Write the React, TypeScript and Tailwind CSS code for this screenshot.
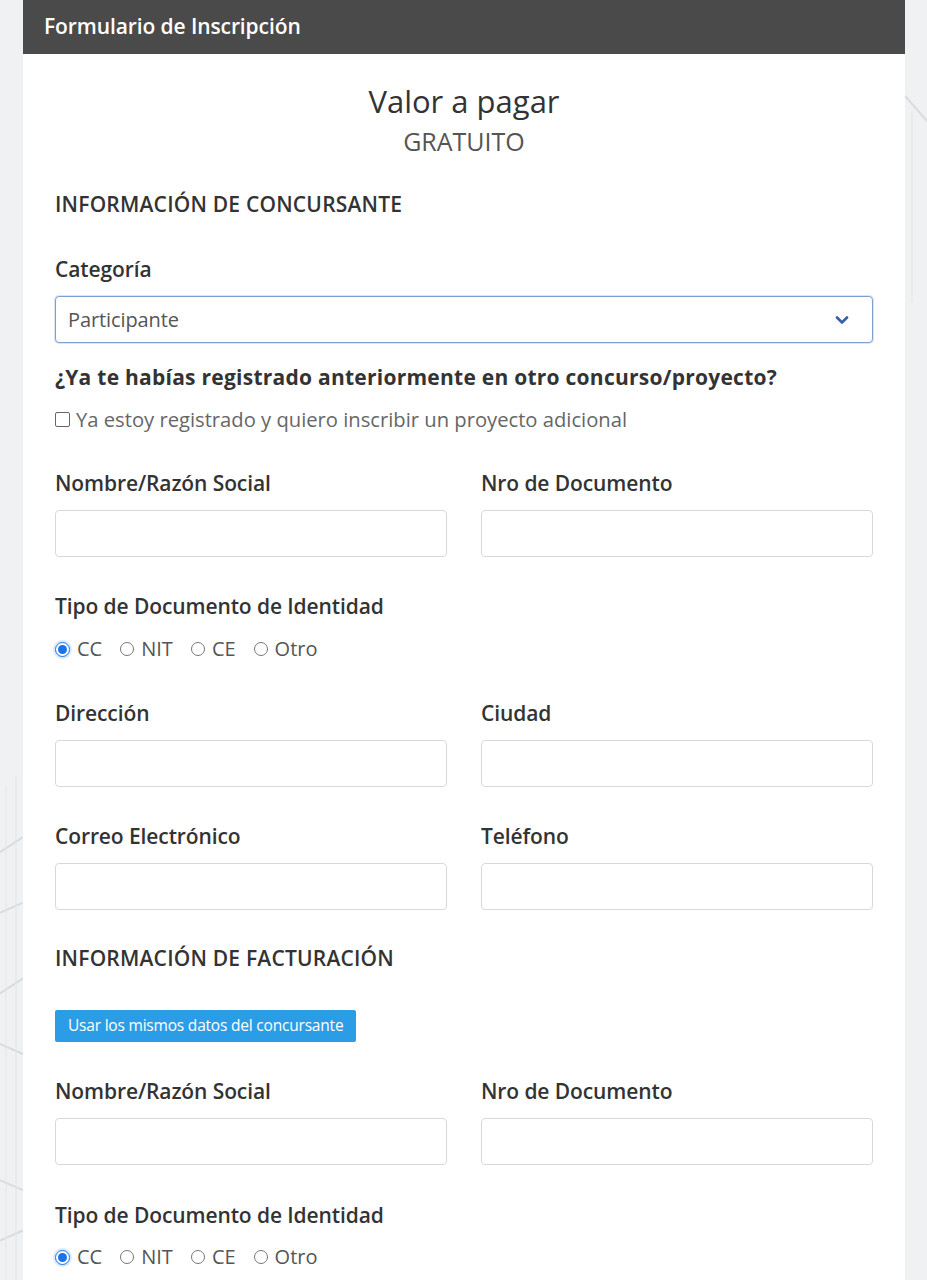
import { ChevronDown } from "lucide-react";

const font = { fontFamily: '"Open Sans", "Noto Sans", "Liberation Sans", sans-serif' };

function Label({ children }: { children: React.ReactNode }) {
  return <p className="text-[21px] font-semibold leading-[28px] tracking-[-0.1px] text-[#333333]">{children}</p>;
}

function TextInput() {
  return <div className="mt-[13px] h-[47px] rounded-[4px] border border-[#d6d9dc] bg-white" />;
}

function Field({ label }: { label: string }) {
  return (
    <div>
      <Label>{label}</Label>
      <TextInput />
    </div>
  );
}

function Radio({ checked, label }: { checked?: boolean; label: string }) {
  return (
    <span className="flex items-center gap-[7px]">
      {checked ? (
        <span className="flex h-[15px] w-[15px] items-center justify-center rounded-full border-[1.5px] border-[#1a73e8] bg-white shadow-[0_0_0_2px_rgba(26,115,232,0.15)]">
          <span className="h-[9px] w-[9px] rounded-full bg-[#1a73e8]" />
        </span>
      ) : (
        <span className="h-[14px] w-[14px] rounded-full border border-[#777777] bg-white" />
      )}
      <span className="text-[20px] leading-[28px] text-[#555555]">{label}</span>
    </span>
  );
}

function DocTypes({ className }: { className: string }) {
  return (
    <div className={`${className} flex items-center gap-[18px]`}>
      <Radio checked label="CC" />
      <Radio label="NIT" />
      <Radio label="CE" />
      <Radio label="Otro" />
    </div>
  );
}

export default function App() {
  return (
    <div className="relative min-h-[1280px] overflow-hidden bg-[#eff1f2]" style={font}>
      <svg className="absolute inset-0 h-full w-full" viewBox="0 0 927 1280" preserveAspectRatio="none">
        <g stroke="#d9dcdf" strokeWidth="2" fill="none">
          <path d="M0 845 L23 830" />
          <path d="M0 905 L23 895" />
          <path d="M0 985 L23 970" />
          <path d="M0 1035 L23 1045" />
          <path d="M0 1170 L23 1180" />
          <path d="M0 1230 L23 1220" />
          <path d="M905 95 L927 120" />
        </g>
        <g stroke="#e4e6e8" strokeWidth="1" fill="none">
          <path d="M6 780 L6 1280" />
          <path d="M16 770 L16 1280" />
          <path d="M912 110 L912 300" />
        </g>
      </svg>
      <div className="relative mx-[23px] min-h-[1280px] w-[882px] bg-white">
        <div className="flex h-[54px] items-center bg-[#4a4a4a] px-[21px]">
          <h1 className="text-[21px] font-semibold tracking-[-0.1px] text-white">Formulario de Inscripción</h1>
        </div>

        <div className="px-[32px] pb-[20px]">
          <div className="pt-[28px] text-center">
            <p className="text-[31px] leading-[38px] text-[#333333]">Valor a pagar</p>
            <p className="mt-[6px] text-[25px] leading-[30px] text-[#555555]">GRATUITO</p>
          </div>

          <h2 className="mt-[34px] text-[21px] font-semibold leading-[28px] tracking-[0.2px] text-[#333333]">
            INFORMACIÓN DE CONCURSANTE
          </h2>

          <div className="mt-[37px]">
            <Label>Categoría</Label>
            <div className="mt-[13px] flex h-[47px] items-center justify-between rounded-[4px] border border-[#7f9fd3] bg-white pl-[12px] pr-[20px] shadow-[0_0_0_1px_rgba(120,150,210,0.25)]">
              <span className="text-[20px] tracking-[-0.1px] text-[#555555]">Participante</span>
              <ChevronDown className="h-[20px] w-[20px] text-[#3a5fa8]" strokeWidth={3.2} />
            </div>
          </div>

          <p className="mt-[20px] text-[21px] font-bold leading-[28px] tracking-[0.25px] text-[#333333]">
            ¿Ya te habías registrado anteriormente en otro concurso/proyecto?
          </p>
          <div className="mt-[14px] flex items-center gap-[6px]">
            <span className="h-[15px] w-[15px] rounded-[2px] border border-[#666666] bg-white" />
            <span className="text-[20.2px] leading-[28px] text-[#666666]">
              Ya estoy registrado y quiero inscribir un proyecto adicional
            </span>
          </div>

          <div className="mt-[36px] grid grid-cols-2 gap-x-[34px]">
            <Field label="Nombre/Razón Social" />
            <Field label="Nro de Documento" />
          </div>

          <div className="mt-[35px]">
            <Label>Tipo de Documento de Identidad</Label>
            <DocTypes className="mt-[15px]" />
          </div>

          <div className="mt-[36px] grid grid-cols-2 gap-x-[34px]">
            <Field label="Dirección" />
            <Field label="Ciudad" />
          </div>

          <div className="mt-[35px] grid grid-cols-2 gap-x-[34px]">
            <Field label="Correo Electrónico" />
            <Field label="Teléfono" />
          </div>

          <h2 className="mt-[34px] text-[21px] font-semibold leading-[28px] tracking-[0.2px] text-[#333333]">
            INFORMACIÓN DE FACTURACIÓN
          </h2>

          <button className="mt-[38px] flex h-[32px] items-center rounded-[2px] bg-[#2b9de6] px-[13px] text-[15.5px] tracking-[-0.2px] text-white">
            Usar los mismos datos del concursante
          </button>

          <div className="mt-[35px] grid grid-cols-2 gap-x-[34px]">
            <Field label="Nombre/Razón Social" />
            <Field label="Nro de Documento" />
          </div>

          <div className="mt-[36px]">
            <Label>Tipo de Documento de Identidad</Label>
            <DocTypes className="mt-[14px]" />
          </div>
        </div>
      </div>
    </div>
  );
}
